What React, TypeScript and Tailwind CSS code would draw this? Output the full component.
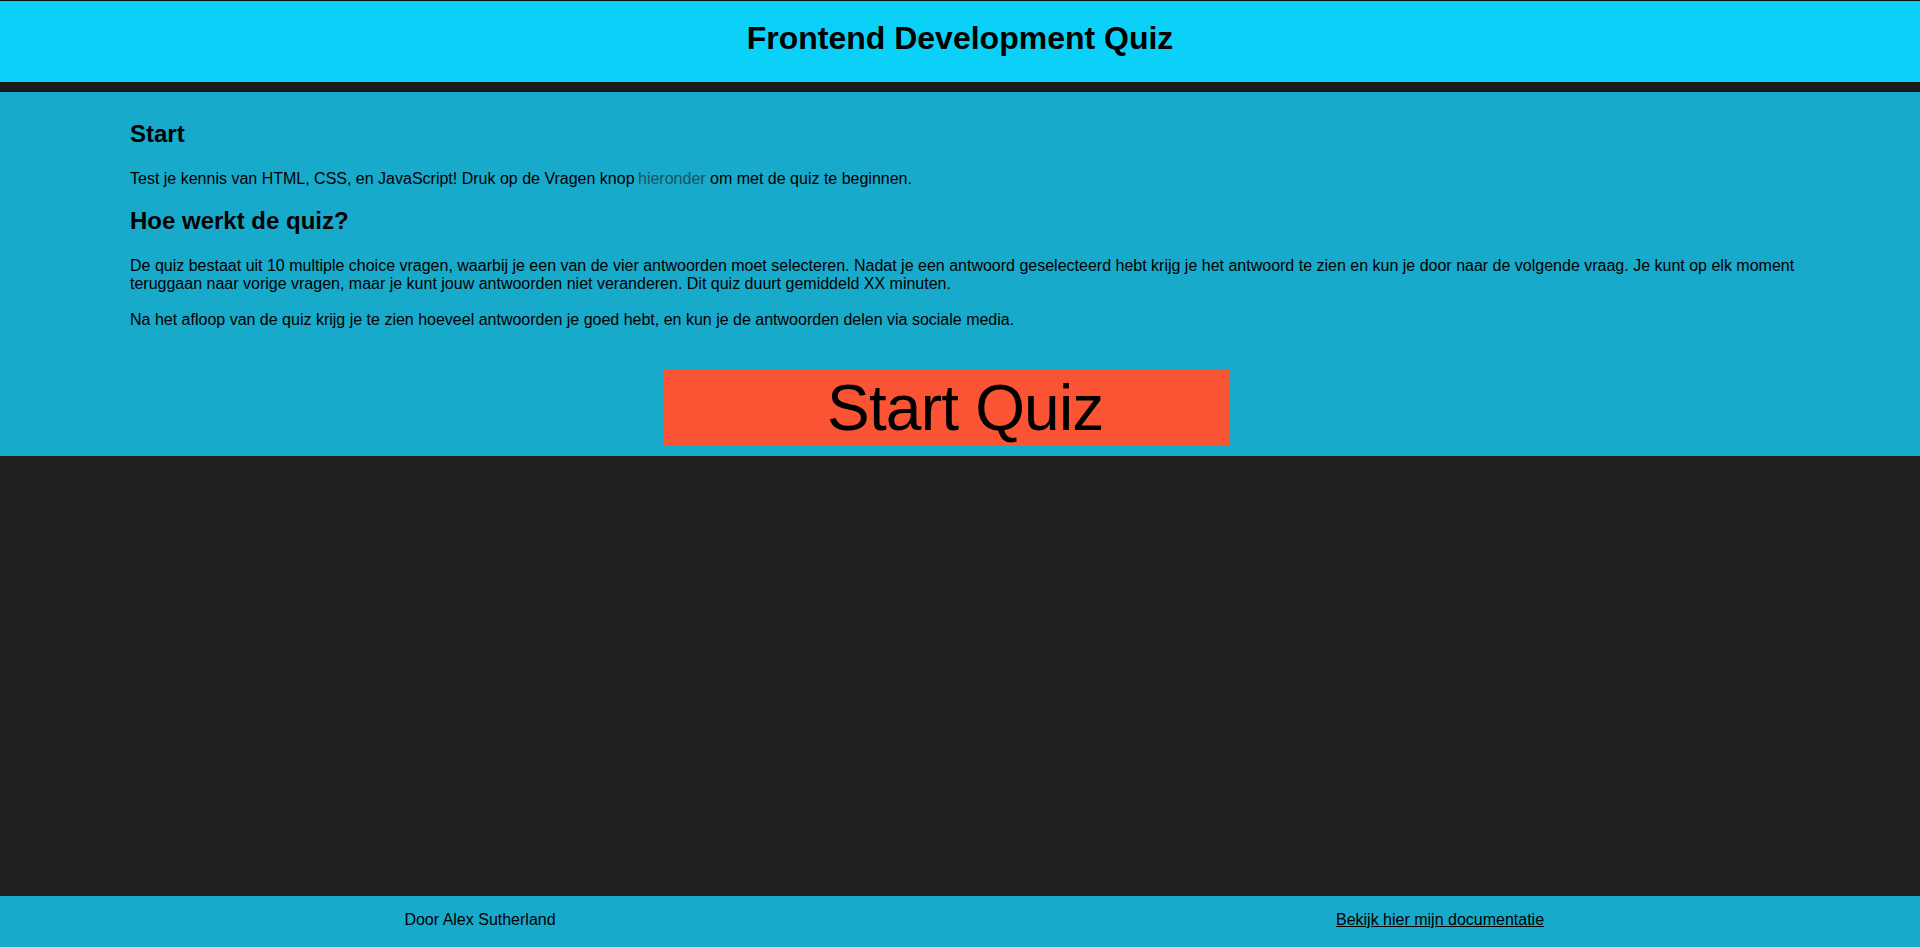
export default function App() {
  return (
    <div className="min-h-screen flex flex-col bg-[#202020] text-black font-['Liberation_Sans',Arial,sans-serif]">
      {/* Header */}
      <header className="border-t border-[#111] bg-[#0bd0f8] pt-[19px] pb-[25px]">
        <h1 className="text-center text-[32px] font-bold leading-[37px]">
          Frontend Development Quiz
        </h1>
      </header>
      <div className="h-[10px] bg-[#1a1a1a]" />

      {/* Intro */}
      <main className="bg-[#17aacb] pt-[28px] pb-[10px]">
        <div className="ml-[130px] mr-[90px]">
          <h2 className="text-[24px] font-bold leading-[28px]">Start</h2>
          <p className="mt-[22px] text-[16px] leading-[18px]">
            Test je kennis van HTML, CSS, en JavaScript! Druk op de Vragen knop{" "}
            <a className="-ml-[1px] text-[#1b5260]">hieronder</a> om met de quiz te beginnen.
          </p>

          <h2 className="mt-[19px] text-[24px] font-bold leading-[28px]">Hoe werkt de quiz?</h2>
          <p className="mt-[22px] text-[16px] leading-[18px]">
            De quiz bestaat uit 10 multiple choice vragen, waarbij je een van de vier antwoorden moet
            selecteren. Nadat je een antwoord geselecteerd hebt krijg je het antwoord te zien en kun je
            door naar de volgende vraag. Je kunt op elk moment teruggaan naar vorige vragen, maar je kunt
            jouw antwoorden niet veranderen. Dit quiz duurt gemiddeld XX minuten.
          </p>
          <p className="mt-[18px] text-[16px] leading-[18px]">
            Na het afloop van de quiz krijg je te zien hoeveel antwoorden je goed hebt, en kun je de
            antwoorden delen via sociale media.
          </p>
        </div>

        <button className="mt-[40px] ml-[663px] flex h-[77px] w-[567px] items-center bg-[#fb5434] pl-[164px] text-[64px] leading-[64px] tracking-[-0.8px]">
          Start Quiz
        </button>
      </main>

      <div className="flex-1" />

      {/* Footer */}
      <footer className="grid h-[51px] grid-cols-2 bg-[#17aacb] pt-[15px] text-[16px] leading-[18px]">
        <div className="text-center">Door Alex Sutherland</div>
        <div className="text-center">
          <a href="#" className="underline">
            Bekijk hier mijn documentatie
          </a>
        </div>
      </footer>
    </div>
  );
}
